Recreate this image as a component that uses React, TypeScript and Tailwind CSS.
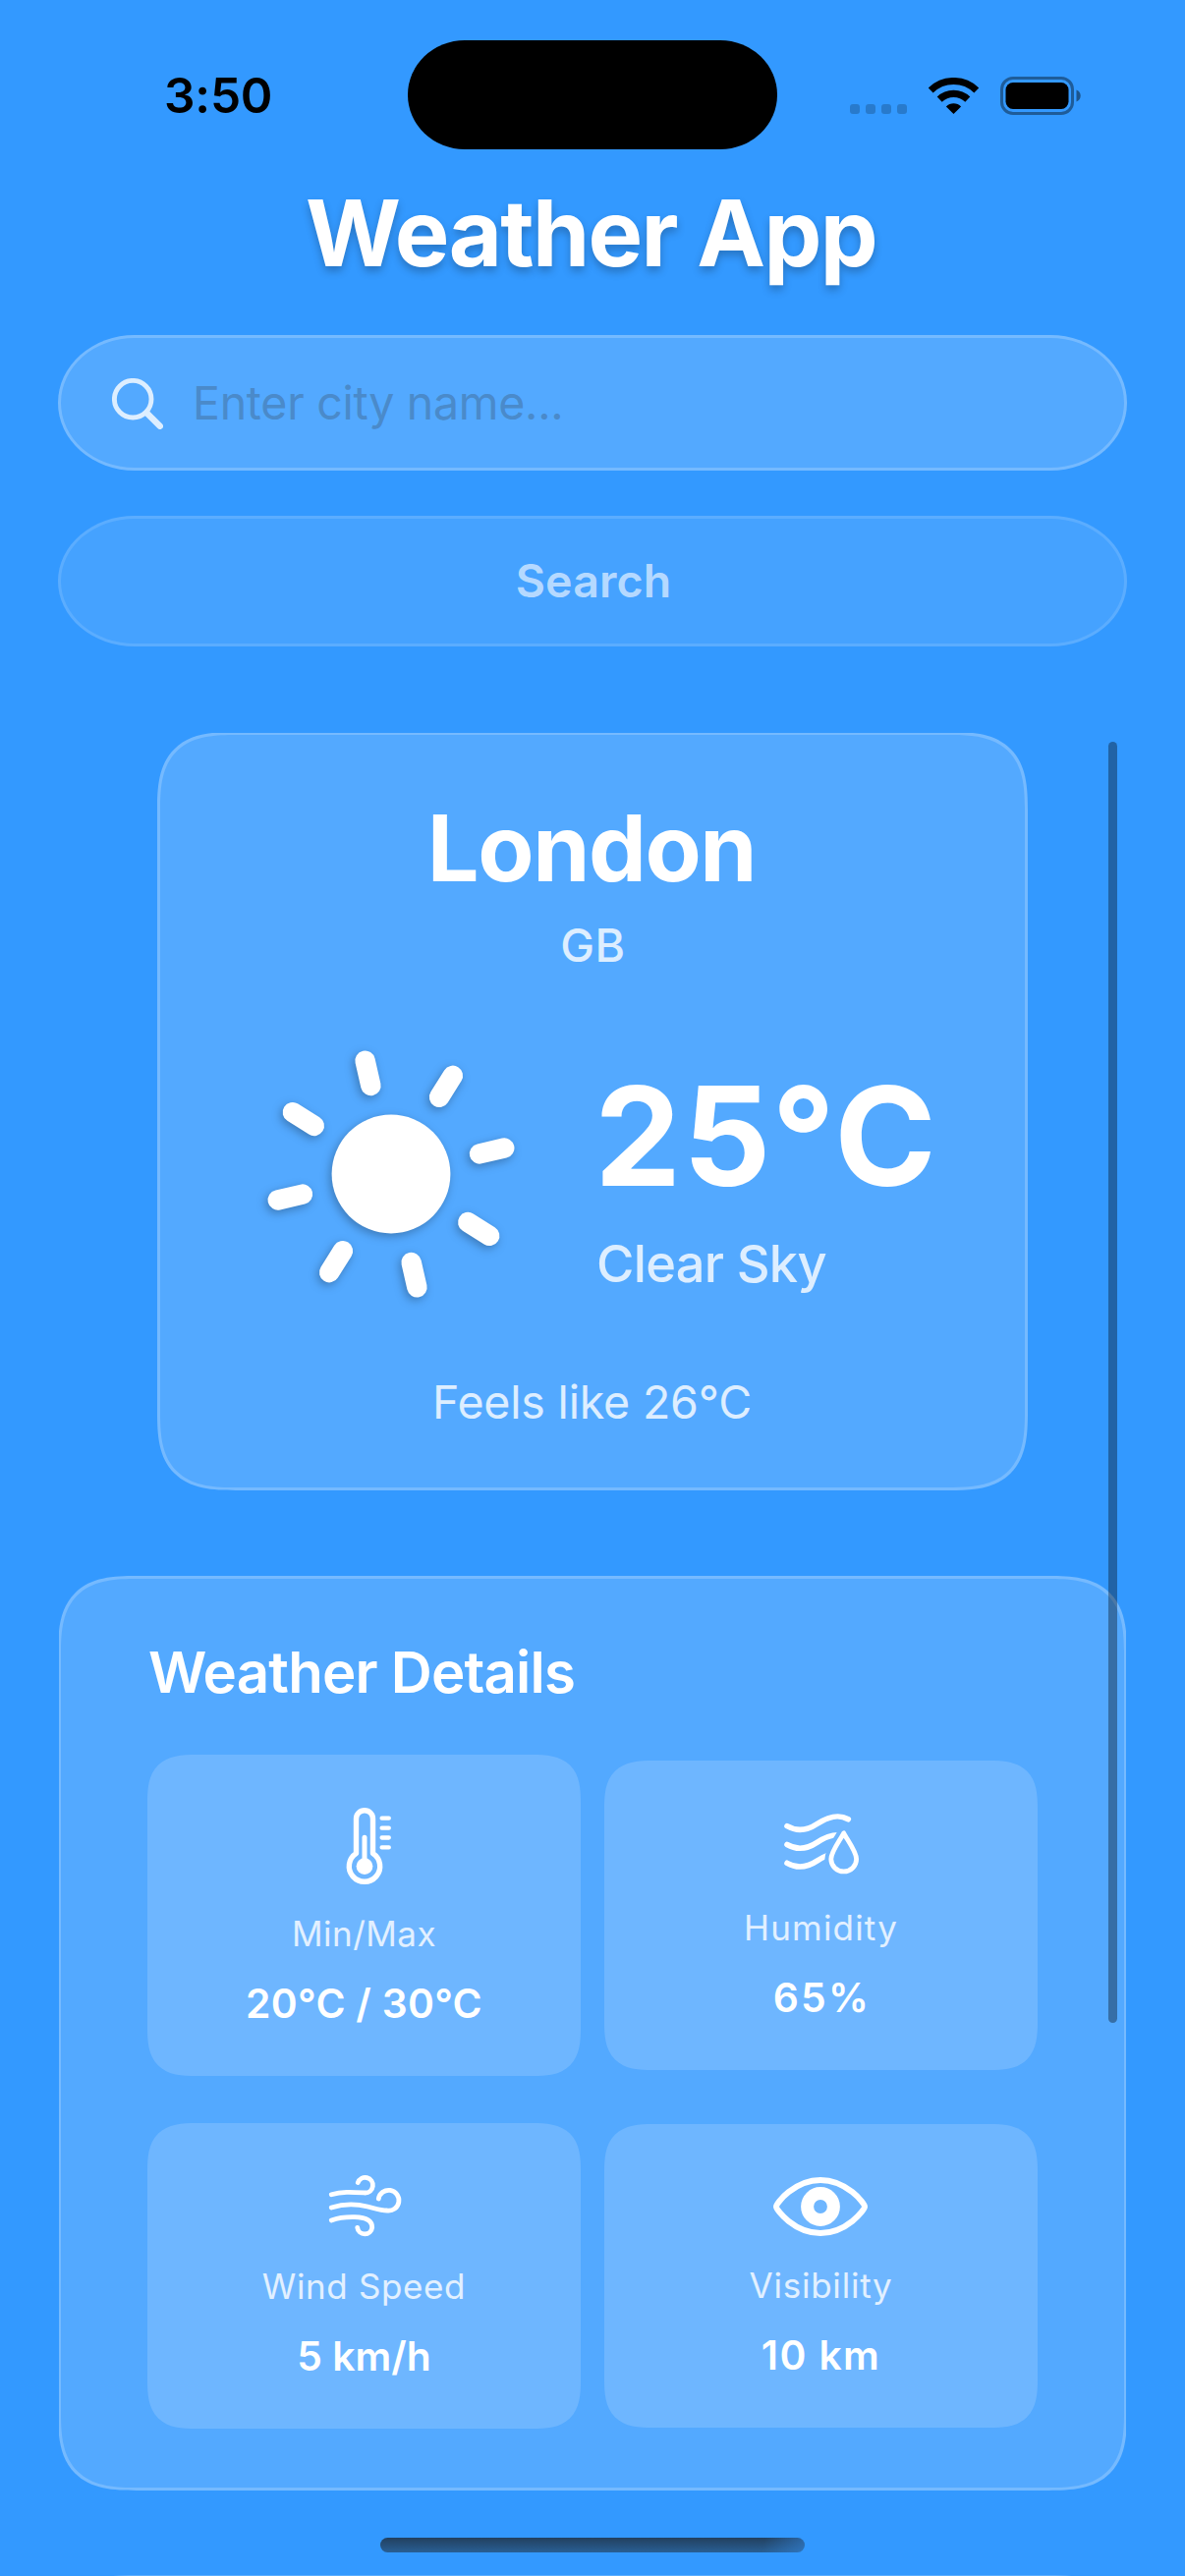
import type { ReactNode } from 'react';

function SignalDots() {
  return (
    <svg width="58" height="37" viewBox="0 0 58 37" fill="#000" fillOpacity="0.2">
      <rect x="0" y="27" width="10" height="10" rx="3" />
      <rect x="16" y="27" width="10" height="10" rx="3" />
      <rect x="32" y="27" width="10" height="10" rx="3" />
      <rect x="48" y="27" width="10" height="10" rx="3" />
    </svg>
  );
}

function WifiIcon() {
  return (
    <svg width="51" height="37" viewBox="0 0 51 37" fill="none" stroke="#000">
      <path d="M2.2 12.9A33.5 33.5 0 0 1 48.8 12.9" strokeWidth="7" />
      <path d="M11.2 22.2A20.6 20.6 0 0 1 39.8 22.2" strokeWidth="7.2" />
      <path d="M25.5 37L17.9 29.4A10.8 10.8 0 0 1 33.1 29.4Z" fill="#000" stroke="none" />
    </svg>
  );
}

function BatteryIcon() {
  return (
    <svg width="83" height="39" viewBox="0 0 83 39">
      <rect x="1.5" y="1.5" width="72" height="36" rx="11.5" fill="none" stroke="#000" strokeOpacity="0.4" strokeWidth="3" />
      <rect x="5.5" y="6" width="64" height="27" rx="7.5" />
      <path d="M77.5 13.5c2.6 1 4.2 3.2 4.2 6s-1.6 5-4.2 6z" fillOpacity="0.45" />
    </svg>
  );
}

function SearchIcon() {
  return (
    <svg width="52" height="52" viewBox="0 0 52 52" fill="none" stroke="#ddeeff" strokeLinecap="round">
      <circle cx="21.2" cy="21.2" r="18.8" strokeWidth="4.9" />
      <path d="M35.5 35.5L48.8 48.8" strokeWidth="6.4" />
    </svg>
  );
}

const RAYS = [0, 45, 90, 135, 180, 225, 270, 315];

function SunIcon() {
  return (
    <svg
      width="252"
      height="252"
      viewBox="-126 -126 252 252"
      className="overflow-visible drop-shadow-[-2px_3px_5px_rgba(0,0,0,0.28)]"
      fill="#fff"
    >
      <circle r="60.4" />
      <g stroke="#fff" strokeWidth="20.5" strokeLinecap="round">
        {RAYS.map((angle) => (
          <path key={angle} d="M0 -92.4V-118.2" transform={`rotate(${angle - 12.9})`} />
        ))}
      </g>
    </svg>
  );
}

function ThermometerIcon() {
  return (
    <svg width="54" height="78" viewBox="0 0 54 78" fill="none" stroke="#fff" strokeLinecap="round" strokeLinejoin="round">
      <path d="M18.5 46.4V11.2a8.5 8.5 0 0 1 17 0V46.4A15.7 15.7 0 1 1 18.5 46.4Z" strokeWidth="5.4" />
      <path d="M27 30.2V58" strokeWidth="5" />
      <circle cx="27" cy="59.6" r="8.4" fill="#fff" stroke="none" />
      <path d="M44.6 10.7H51.8M44.6 20.7H51.8M44.6 30.5H51.8M44.6 40.4H51.8" strokeWidth="4.3" />
    </svg>
  );
}

function HumidityIcon() {
  const drop = 'M61.7 19.8C58 27 48.8 38.5 48.8 46.2A12.9 12.7 0 0 0 74.6 46.2C74.6 38.5 65.4 27 61.7 19.8Z';
  return (
    <svg width="77" height="62" viewBox="0 0 77 62" className="overflow-visible" fill="none" stroke="#fff" strokeLinecap="round" strokeLinejoin="round">
      <mask id="drop-gap" maskUnits="userSpaceOnUse" x="-5" y="-5" width="90" height="75">
        <rect x="-5" y="-5" width="90" height="75" fill="#fff" stroke="none" />
        <path d={drop} fill="#000" stroke="#000" strokeWidth="12.8" />
        <rect x="64" y="10" width="20" height="50" fill="#000" stroke="none" />
      </mask>
      <path d="M4 12.7C14 18.5 24 17.5 34.5 10.5C46 3 56 0 66.3 5.7" strokeWidth="5.6" />
      <g mask="url(#drop-gap)" strokeWidth="5.6">
        <path d="M4 31.5C14 37.3 24 36.3 34.5 29.3C46 21.8 56 18.8 66.3 24.5" />
        <path d="M4 50.3C14 56.1 24 55.1 34.5 48.1C46 40.6 56 37.6 66.3 43.3" />
      </g>
      <path d={drop} strokeWidth="4.8" />
    </svg>
  );
}

function WindIcon() {
  return (
    <svg width="73" height="63" viewBox="0 0 73 63" className="overflow-visible" fill="none" stroke="#fff" strokeWidth="4.8" strokeLinecap="round">
      <path d="M3.3 18.7C14 15.5 24 16.2 37.5 17A7.8 7.8 0 1 0 30.3 6.5" />
      <path d="M3.3 32C12 29.2 24 27 40 31C48 33 54 35 60 35A10.4 10.4 0 1 0 51.3 23" />
      <path d="M3.3 45C10 42.5 18 41.5 27 41.7C38 42 44.7 45 44.7 52.2A7.55 7.55 0 0 1 29.7 52.3" />
    </svg>
  );
}

function EyeIcon() {
  return (
    <svg width="97" height="60" viewBox="0 0 97 60" fill="none" stroke="#fff">
      <path d="M3 30C3 26.5 21.5 3 48 3S93 26.5 93 30S74.5 57 48 57S3 33.5 3 30Z" strokeWidth="6" />
      <circle cx="48" cy="30" r="13.4" strokeWidth="13" />
    </svg>
  );
}

interface DetailProps {
  icon: ReactNode;
  label: string;
  value: string;
  cardClass: string;
  slotClass: string;
  labelClass: string;
  valueClass: string;
}

function DetailCard({ icon, label, value, cardClass, slotClass, labelClass, valueClass }: DetailProps) {
  return (
    <div className={`flex w-[441px] flex-col items-center rounded-[50px] bg-white/16 pt-[54px] [corner-shape:superellipse(1.5)] ${cardClass}`}>
      <div className={slotClass}>{icon}</div>
      <div className={`text-[35px] leading-[36px] text-white/80 ${labelClass}`}>{label}</div>
      <div className={`mt-8 text-[40.8px] leading-[42px] font-semibold text-white ${valueClass}`}>{value}</div>
    </div>
  );
}

const DETAILS: DetailProps[] = [
  {
    icon: <ThermometerIcon />,
    label: 'Min/Max',
    value: '20°C / 30°C',
    cardClass: 'h-[327px]',
    slotClass: 'h-[110px]',
    labelClass: 'tracking-[0.47px]',
    valueClass: 'tracking-[0.3px]',
  },
  {
    icon: <HumidityIcon />,
    label: 'Humidity',
    value: '65%',
    cardClass: 'h-[315px]',
    slotClass: 'h-[98px]',
    labelClass: 'tracking-[1.2px]',
    valueClass: 'pl-[2px] tracking-[2.2px]',
  },
  {
    icon: <WindIcon />,
    label: 'Wind Speed',
    value: '5 km/h',
    cardClass: 'h-[311px]',
    slotClass: 'h-[94px]',
    labelClass: 'tracking-[0.63px]',
    valueClass: 'tracking-normal',
  },
  {
    icon: <EyeIcon />,
    label: 'Visibility',
    value: '10 km',
    cardClass: 'h-[309px]',
    slotClass: 'h-[92px]',
    labelClass: 'tracking-[0.78px]',
    valueClass: 'tracking-[1.4px]',
  },
];

export default function App() {
  return (
    <div className="relative flex h-[2622px] w-[1206px] flex-col overflow-hidden bg-[#3399ff] font-['Inter',sans-serif]">
      {/* Status bar */}
      <div className="flex h-[190px] items-start pt-[41px]">
        <div className="flex h-[111px] w-[415px] items-center pt-[3px] pl-[167px] text-[49.5px] leading-none font-semibold tracking-[-0.2px] text-black">
          3:50
        </div>
        <div className="h-[111px] w-[376px] rounded-[58px/55.5px] bg-black" />
        <div className="flex h-[111px] items-center pt-[2px] pl-[74px]">
          <SignalDots />
          <div className="ml-[22px]">
            <WifiIcon />
          </div>
          <div className="ml-[22px]">
            <BatteryIcon />
          </div>
        </div>
      </div>

      <h1 className="h-[94px] pr-[3px] text-center text-[93.5px] leading-[94px] font-bold tracking-[-1.7px] text-white [text-shadow:0_5px_9px_rgba(0,0,0,0.24)]">
        Weather App
      </h1>

      {/* Search */}
      <div className="mx-[59px] mt-[57px] flex h-[138px] items-center gap-[30px] rounded-[78px/69px] border-3 border-white/20 bg-white/16 pt-px pl-[52px]">
        <SearchIcon />
        <input
          className="h-[60px] flex-1 bg-transparent text-[46.5px] tracking-[-0.29px] text-white outline-none placeholder:text-[#4a8aca] placeholder:opacity-100"
          placeholder="Enter city name..."
        />
      </div>
      <button className="mx-[59px] mt-[46px] flex h-[133px] shrink-0 items-center justify-center rounded-[78px/66.5px] border-3 border-white/12 bg-white/9 pl-[2px] text-[46.5px] leading-none font-semibold tracking-[0.1px] text-[#b5d9ff]">
        Search
      </button>

      {/* Scrollable results */}
      <div className="relative mx-[60px] mt-[88px] h-[1876px] shrink-0 overflow-hidden">
        <section className="mx-[100px] -mt-px flex h-[772px] flex-col items-center rounded-[80px] border-3 border-white/20 bg-white/16 pt-[68px] [corner-shape:superellipse(1.5)]">
          <h2 className="pr-[2px] text-[93.5px] leading-[94px] font-bold tracking-[-1.44px] text-white">London</h2>
          <p className="mt-[29px] pl-px text-[46.5px] leading-[47px] font-medium tracking-[0.5px] text-white/80">GB</p>
          <div className="mt-[83px] flex gap-[81px] self-start pl-[109px]">
            <SunIcon />
            <div className="pt-[17px]">
              <p className="text-[140px] leading-[140px] font-bold tracking-[1.8px] text-white">25°C</p>
              <p className="mt-[34px] pl-[2px] text-[52.4px] leading-[52px] font-medium tracking-[-0.7px] text-white/80">Clear Sky</p>
            </div>
          </div>
          <p className="mt-[83px] pr-px text-[46.5px] leading-[47px] tracking-[-0.18px] text-white/80">Feels like 26°C</p>
        </section>

        <section className="-mx-px mt-[87px] h-[931px] rounded-[80px] border-3 border-white/20 bg-white/16 pt-[66px] pl-[88px] [corner-shape:superellipse(1.5)]">
          <h3 className="pl-px text-[58.2px] leading-[58px] font-semibold tracking-[-0.82px] text-white">Weather Details</h3>
          <div className="mt-[55px] grid w-[906px] grid-cols-2 items-center gap-x-6 gap-y-12">
            {DETAILS.map((detail) => (
              <DetailCard key={detail.label} {...detail} />
            ))}
          </div>
        </section>

        <section className="-mx-px mt-[86px] h-[300px] rounded-[80px] border-3 border-white/20 [corner-shape:superellipse(1.5)]" />

        {/* Scroll indicator */}
        <div className="absolute top-[9px] left-[1068px] h-[1304px] w-[9px] rounded-full bg-black/35" />
      </div>

      {/* Home indicator */}
      <div className="absolute bottom-[24px] left-[387px] h-[15px] w-[432px] rounded-full bg-[linear-gradient(100deg,transparent_90%,rgba(50,130,215,0.6)_100%),linear-gradient(to_bottom,#22405f,#295f94)]" />
    </div>
  );
}
